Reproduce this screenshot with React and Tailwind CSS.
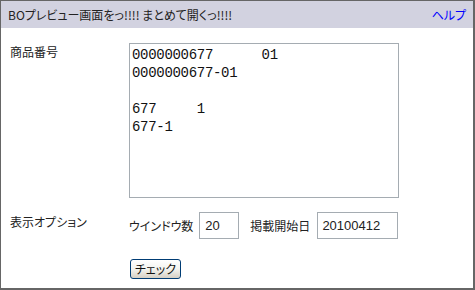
export default function App() {
  const jp = {
    fontFamily: '"Noto Sans CJK JP", "Noto Sans", sans-serif',
    fontFeatureSettings: '"palt"',
  };
  const text =
    "0000000677      01\n0000000677-01\n\n677     1\n677-1";
  return (
    <div
      className="w-[475px] h-[290px] bg-white border-l border-r-2 border-b-2 border-t border-[#666666] text-[12px] text-[#222222] flex flex-col"
      style={jp}
    >
      <div className="h-[27px] bg-[#d2d2e0] flex items-center justify-between pl-[7px] pr-[7px] shrink-0">
        <span className="leading-none">BOプレビュー画面をっ!!!! まとめて開くっ!!!!</span>
        <a href="#" className="text-[#0000ff] leading-none">ヘルプ</a>
      </div>
      <div className="grid grid-cols-[119px_1fr] pl-[9px] pt-[15px]">
        <div className="pt-[2px] leading-[14px]">商品番号</div>
        <div>
          <textarea
            readOnly
            value={text}
            className="block w-[270px] h-[155px] border border-[#a5acb2] resize-none overflow-hidden px-[2px] pt-[2px] text-[14px] leading-[18px] tracking-[-0.3px] text-[#111] outline-none"
            style={{ fontFamily: '"Liberation Mono", monospace' }}
          />
        </div>
        <div className="pt-[17px] leading-[14px]">表示オプション</div>
        <div className="pt-[14px] flex items-center">
          <span>ウインドウ数</span>
          <input
            readOnly
            value="20"
            className="ml-[6px] w-[40px] h-[27px] border border-[#a5acb2] px-[5px] text-[13px] outline-none"
            style={{ fontFamily: '"Liberation Sans", Arial, sans-serif' }}
          />
          <span className="ml-[11px]">掲載開始日</span>
          <input
            readOnly
            value="20100412"
            className="ml-[7px] w-[81px] h-[27px] border border-[#a5acb2] px-[4px] text-[13px] outline-none"
            style={{ fontFamily: '"Liberation Sans", Arial, sans-serif' }}
          />
        </div>
        <div />
        <div className="pt-[20px]">
          <button className="ml-[1px] w-[51px] h-[20px] rounded-[3px] border border-[#003c74] bg-gradient-to-b from-white via-[#f3f3ef] to-[#d6d0c5] text-[12px] leading-none text-[#111]">
            チェック
          </button>
        </div>
      </div>
    </div>
  );
}
